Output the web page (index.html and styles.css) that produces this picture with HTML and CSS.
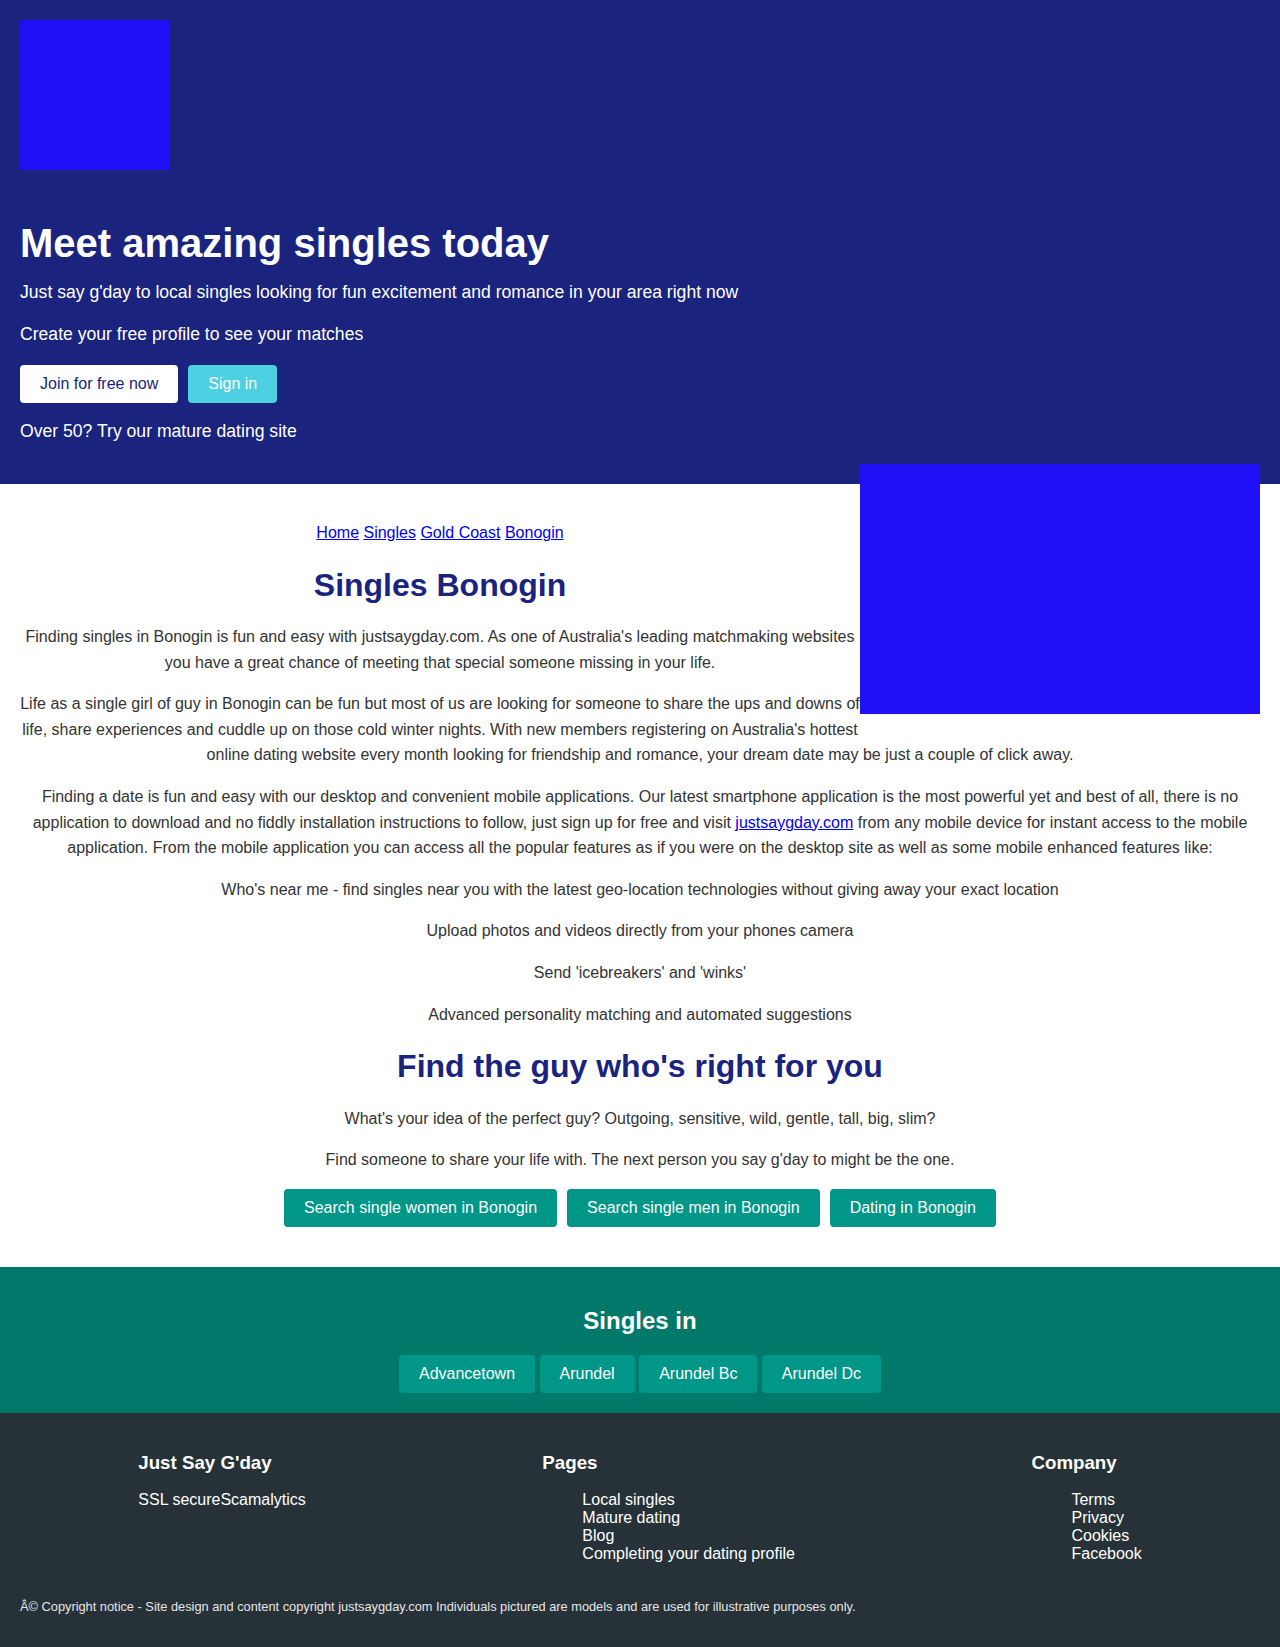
FILE: index.html
```html
<!DOCTYPE html>
<html lang="en">
<head>
<meta charset="utf-8">
<title>Singles Bonogin</title>
<link rel="stylesheet" href="styles.css">
</head>
<body>
<header class="hero">
  <div class="logo"></div>
  <h1 class="hero-title">Meet amazing singles today</h1>
  <p class="hero-text">Just say g'day to local singles looking for fun excitement and romance in your area right now</p>
  <p class="hero-text">Create your free profile to see your matches</p>
  <div class="hero-actions">
    <a class="btn btn-light" href="#">Join for free now</a>
    <a class="btn btn-cyan" href="#">Sign in</a>
  </div>
  <p class="hero-text">Over 50? Try our mature dating site</p>
</header>

<main class="content">
  <div class="feature-image"></div>
  <p class="breadcrumbs"><a href="#">Home</a> <a href="#">Singles</a> <a href="#">Gold Coast</a> <a href="#">Bonogin</a></p>
  <h2 class="section-title">Singles Bonogin</h2>
  <p class="copy">Finding singles in Bonogin is fun and easy with justsaygday.com. As one of Australia's leading matchmaking websites you have a great chance of meeting that special someone missing in your life.</p>
  <p class="copy">Life as a single girl of guy in Bonogin can be fun but most of us are looking for someone to share the ups and downs of life, share experiences and cuddle up on those cold winter nights. With new members registering on Australia's hottest online dating website every month looking for friendship and romance, your dream date may be just a couple of click away.</p>
  <p class="copy">Finding a date is fun and easy with our desktop and convenient mobile applications. Our latest smartphone application is the most powerful yet and best of all, there is no application to download and no fiddly installation instructions to follow, just sign up for free and visit <a href="#">justsaygday.com</a> from any mobile device for instant access to the mobile application. From the mobile application you can access all the popular features as if you were on the desktop site as well as some mobile enhanced features like:</p>
  <p class="copy">Who's near me - find singles near you with the latest geo-location technologies without giving away your exact location</p>
  <p class="copy">Upload photos and videos directly from your phones camera</p>
  <p class="copy">Send 'icebreakers' and 'winks'</p>
  <p class="copy">Advanced personality matching and automated suggestions</p>
  <h2 class="section-title">Find the guy who's right for you</h2>
  <p class="copy">What's your idea of the perfect guy? Outgoing, sensitive, wild, gentle, tall, big, slim?</p>
  <p class="copy">Find someone to share your life with. The next person you say g'day to might be the one.</p>
  <div class="search-actions">
    <a class="btn btn-teal" href="#">Search single women in Bonogin</a>
    <a class="btn btn-teal" href="#">Search single men in Bonogin</a>
    <a class="btn btn-teal" href="#">Dating in Bonogin</a>
  </div>
</main>

<section class="nearby">
  <h3 class="nearby-title">Singles in</h3>
  <div class="nearby-links">
    <a class="btn btn-teal" href="#">Advancetown</a>
    <a class="btn btn-teal" href="#">Arundel</a>
    <a class="btn btn-teal" href="#">Arundel Bc</a>
    <a class="btn btn-teal" href="#">Arundel Dc</a>
  </div>
</section>

<footer class="site-footer">
  <div class="footer-cols">
    <div class="footer-col">
      <h3 class="footer-heading">Just Say G'day</h3>
      <p class="footer-badges"><span>SSL secure</span><span>Scamalytics</span></p>
    </div>
    <div class="footer-col">
      <h3 class="footer-heading">Pages</h3>
      <ul class="footer-list">
        <li><a href="#">Local singles</a></li>
        <li><a href="#">Mature dating</a></li>
        <li><a href="#">Blog</a></li>
        <li><a href="#">Completing your dating profile</a></li>
      </ul>
    </div>
    <div class="footer-col">
      <h3 class="footer-heading">Company</h3>
      <ul class="footer-list">
        <li><a href="#">Terms</a></li>
        <li><a href="#">Privacy</a></li>
        <li><a href="#">Cookies</a></li>
        <li><a href="#">Facebook</a></li>
      </ul>
    </div>
  </div>
  <p class="copyright">Â© Copyright notice - Site design and content copyright justsaygday.com Individuals pictured are models and are used for illustrative purposes only.</p>
</footer>
</body>
</html>
```

FILE: styles.css
```css
html, body {
  margin: 0;
  padding: 0;
}

body {
  font-family: "Liberation Sans", Arial, Helvetica, sans-serif;
  font-size: 16px;
  background: #ffffff;
  color: #333333;
}

/* ---------- Hero ---------- */
.hero {
  background: #1a237e;
  color: #ffffff;
  padding: 20px 20px 24px;
}

.logo {
  width: 150px;
  height: 150px;
  background: #2010f8;
}

.hero-title {
  font-size: 40px;
  line-height: 46px;
  font-weight: bold;
  margin: 50px 0 13px;
}

.hero-text {
  font-size: 17.6px;
  line-height: 27px;
  margin: 0 0 15px;
}

.hero-actions {
  display: flex;
  gap: 10px;
  margin: 17px 0 15px;
}

.btn {
  display: inline-block;
  padding: 10px 20px;
  font-size: 16px;
  line-height: 18px;
  border-radius: 4px;
  text-decoration: none;
}

.btn-light {
  background: #ffffff;
  color: #1a237e;
}

.btn-cyan {
  background: #4dd0e1;
  color: #ffffff;
}

.btn-teal {
  background: #009688;
  color: #ffffff;
}

/* ---------- Content ---------- */
.content {
  padding: 20px 20px 20px;
  text-align: center;
}

.feature-image {
  float: right;
  width: 400px;
  height: 250px;
  margin: -40px 0 20px 0;
  background: #2010f8;
}

.breadcrumbs {
  margin: 16px 0;
  line-height: 1.6;
}

.breadcrumbs a {
  color: #0000ee;
}

.section-title {
  color: #1a237e;
  font-size: 32px;
  line-height: 1.2;
  font-weight: bold;
  margin: 20px 0;
}

.copy {
  line-height: 1.6;
  margin: 16px 0;
  color: #333333;
}

.copy a {
  color: #0000ee;
}

.search-actions {
  display: flex;
  justify-content: center;
  gap: 10px;
  margin: 16px 0 20px;
}

/* ---------- Nearby ---------- */
.nearby {
  background: #00796b;
  color: #ffffff;
  text-align: center;
  padding: 40px 20px 20px;
}

.nearby-title {
  font-size: 24px;
  line-height: 1.2;
  margin: 0 0 20px;
}

/* ---------- Footer ---------- */
.site-footer {
  background: #263238;
  color: #ffffff;
  padding: 20px;
}

.footer-cols {
  display: flex;
  justify-content: space-around;
}

.footer-heading {
  font-size: 18.72px;
  margin: 18.72px 0 17px;
}

.footer-badges {
  margin: 16px 0;
}

.footer-list {
  list-style: none;
  padding-left: 40px;
  margin: 16px 0;
}

.footer-list a {
  color: #ffffff;
  text-decoration: none;
}

.copyright {
  font-size: 12.8px;
  color: #e6e6e6;
  margin: 20px 0 13px;
}
```
